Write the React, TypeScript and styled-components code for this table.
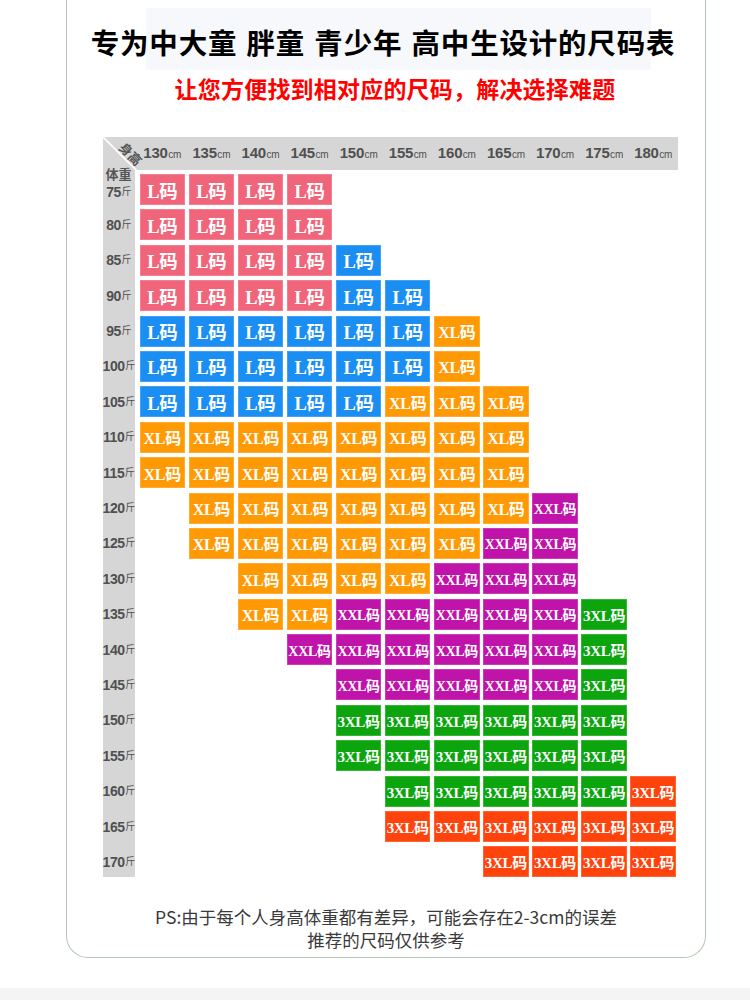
import React from 'react'
import styled, { createGlobalStyle } from 'styled-components'

const GlobalStyle = createGlobalStyle`
  html, body {
    margin: 0;
    padding: 0;
    background: #fff;
  }
  body {
    font-family: 'Noto Sans CJK SC', 'Liberation Sans', sans-serif;
  }
`

type Kind = 'P' | 'B' | 'O' | 'M' | 'G' | 'R' | '.'

const COLORS: Record<Exclude<Kind, '.'>, string> = {
  P: '#f0657a',
  B: '#1b8ef4',
  O: '#ff9a05',
  M: '#c013a9',
  G: '#0ca50e',
  R: '#ff430c',
}

const LABELS: Record<Exclude<Kind, '.'>, string> = {
  P: 'L码',
  B: 'L码',
  O: 'XL码',
  M: 'XXL码',
  G: '3XL码',
  R: '3XL码',
}

const SIZES: Record<Exclude<Kind, '.'>, number> = {
  P: 18.5,
  B: 18.5,
  O: 16,
  M: 14,
  G: 15,
  R: 15,
}

const heights = [130, 135, 140, 145, 150, 155, 160, 165, 170, 175, 180]

const rows: { weight: number; cells: string }[] = [
  { weight: 75, cells: 'PPPP.......' },
  { weight: 80, cells: 'PPPP.......' },
  { weight: 85, cells: 'PPPPB......' },
  { weight: 90, cells: 'PPPPBB.....' },
  { weight: 95, cells: 'BBBBBBO....' },
  { weight: 100, cells: 'BBBBBBO....' },
  { weight: 105, cells: 'BBBBBOOO...' },
  { weight: 110, cells: 'OOOOOOOO...' },
  { weight: 115, cells: 'OOOOOOOO...' },
  { weight: 120, cells: '.OOOOOOOM..' },
  { weight: 125, cells: '.OOOOOOMM..' },
  { weight: 130, cells: '..OOOOMMM..' },
  { weight: 135, cells: '..OOMMMMMG.' },
  { weight: 140, cells: '...MMMMMMG.' },
  { weight: 145, cells: '....MMMMMG.' },
  { weight: 150, cells: '....GGGGGG.' },
  { weight: 155, cells: '....GGGGGG.' },
  { weight: 160, cells: '.....GGGGGR' },
  { weight: 165, cells: '.....RRRRRR' },
  { weight: 170, cells: '.......RRRR' },
]

const Page = styled.div`
  width: 750px;
  height: 1000px;
  overflow: hidden;
  display: flex;
  flex-direction: column;
`

const Frame = styled.div`
  box-sizing: border-box;
  width: 640px;
  height: 959px;
  margin-left: 66px;
  border: 1.5px solid #b5c6b5;
  border-top: none;
  border-radius: 0 0 22px 22px;
  display: flex;
  flex-direction: column;
`

const TitleBand = styled.div`
  margin-top: 8px;
  height: 62px;
  display: flex;
  align-items: center;
  justify-content: center;
  padding-top: 4px;
  padding-right: 6px;
  box-sizing: border-box;
  background: linear-gradient(
    to right,
    transparent 79px,
    #f7f8fb 79px,
    #f7f8fb 584px,
    transparent 584px
  );
`

const Title = styled.h1`
  margin: 0;
  font-size: 28.5px;
  font-weight: 700;
  color: #000;
  white-space: nowrap;
  letter-spacing: 0.8px;
  word-spacing: 2px;
`

const Subtitle = styled.p`
  margin: 4px 0 0;
  line-height: 28px;
  font-size: 23px;
  font-weight: 700;
  color: #ff0000;
  text-align: center;
  padding-left: 18px;
  white-space: nowrap;
  letter-spacing: 0.2px;
`

const Chart = styled.div`
  margin: 35px 0 0 35.5px;
  width: 575px;
`

const HeaderBar = styled.div`
  display: grid;
  grid-template-columns: 33.4px repeat(11, 45.5px);
  column-gap: 3.6px;
  height: 33px;
  align-items: center;
  background: #d6d6d6;
`

const Corner = styled.div`
  position: relative;
  height: 33px;
  z-index: 1;
`

const CornerLine = styled.svg`
  position: absolute;
  left: 0;
  top: 0;
`

const HeightTag = styled.span`
  position: absolute;
  left: 15px;
  top: 10px;
  font-size: 13px;
  font-weight: 700;
  color: #555;
  transform: rotate(45deg);
  white-space: nowrap;
  line-height: 13px;
`

const ColLabel = styled.div`
  text-align: center;
  white-space: nowrap;
  color: #505050;
  font-family: 'Liberation Sans', 'Noto Sans CJK SC', sans-serif;
  font-weight: 700;
  font-size: 15px;
  line-height: 15px;
  letter-spacing: -0.2px;
`

const Unit = styled.span<{ $size: number }>`
  font-size: ${(p) => p.$size}px;
  font-weight: 400;
  margin-left: 0.5px;
`

const Body = styled.div`
  display: flex;
`

const Strip = styled.div`
  position: relative;
  width: 32px;
  background: #d6d6d6;
  display: grid;
  grid-template-rows: repeat(20, 31px);
  row-gap: 4.4px;
  padding-top: 4px;
`

const WeightTitle = styled.span`
  position: absolute;
  left: 0;
  right: 0;
  top: -3px;
  text-align: center;
  font-size: 13px;
  line-height: 13px;
  font-weight: 700;
  color: #555;
`

const RowLabel = styled.div<{ $first?: boolean }>`
  display: flex;
  align-items: center;
  justify-content: center;
  padding-top: ${(p) => (p.$first ? 5 : 0)}px;
  white-space: nowrap;
  color: #505050;
  font-family: 'Liberation Sans', 'Noto Sans CJK SC', sans-serif;
  font-weight: 700;
  font-size: 14px;
  line-height: 14px;
  letter-spacing: -0.4px;
`

const Grid = styled.div`
  margin-left: 5px;
  padding-top: 4px;
  display: grid;
  grid-template-columns: repeat(11, 45.5px);
  grid-template-rows: repeat(20, 31px);
  column-gap: 3.6px;
  row-gap: 4.4px;
`

const Cell = styled.div<{ $bg: string; $size: number }>`
  display: flex;
  align-items: center;
  justify-content: center;
  background: ${(p) => p.$bg};
  box-shadow: inset 0 0 0 1px rgba(255, 255, 255, 0.18);
  color: #fff;
  font-family: 'Liberation Serif', 'Noto Sans CJK SC', serif;
  font-weight: 700;
  font-size: ${(p) => p.$size}px;
  white-space: nowrap;
  letter-spacing: -0.3px;
  overflow: hidden;
`

const Empty = styled.div``

const Note = styled.div`
  margin-top: 28px;
  text-align: center;
  font-size: 17.5px;
  line-height: 23px;
  color: #3a3a3a;
  font-weight: 400;
`

const BottomBand = styled.div`
  margin-top: 30px;
  height: 12px;
  background: #f4f4f4;
`

const App: React.FC = () => (
  <Page>
    <GlobalStyle />
    <Frame>
      <TitleBand>
        <Title>专为中大童 胖童 青少年 高中生设计的尺码表</Title>
      </TitleBand>
      <Subtitle>让您方便找到相对应的尺码，解决选择难题</Subtitle>
      <Chart>
        <HeaderBar>
          <Corner>
            <CornerLine width="34" height="34" viewBox="0 0 34 34">
              <line x1="0" y1="0" x2="34" y2="34" stroke="#fff" strokeWidth="1.6" />
            </CornerLine>
            <HeightTag>身高</HeightTag>
          </Corner>
          {heights.map((h) => (
            <ColLabel key={h}>
              {h}
              <Unit $size={10}>cm</Unit>
            </ColLabel>
          ))}
        </HeaderBar>
        <Body>
          <Strip>
            <WeightTitle>体重</WeightTitle>
            {rows.map((r, i) => (
              <RowLabel key={r.weight} $first={i === 0}>
                {r.weight}
                <Unit $size={10}>斤</Unit>
              </RowLabel>
            ))}
          </Strip>
          <Grid>
            {rows.map((r) =>
              r.cells.split('').map((c, j) => {
                const k = c as Kind
                if (k === '.') return <Empty key={`${r.weight}-${j}`} />
                return (
                  <Cell key={`${r.weight}-${j}`} $bg={COLORS[k]} $size={SIZES[k]}>
                    {LABELS[k]}
                  </Cell>
                )
              })
            )}
          </Grid>
        </Body>
      </Chart>
      <Note>
        PS:由于每个人身高体重都有差异，可能会存在2-3cm的误差
        <br />
        推荐的尺码仅供参考
      </Note>
    </Frame>
    <BottomBand />
  </Page>
)

export default App
